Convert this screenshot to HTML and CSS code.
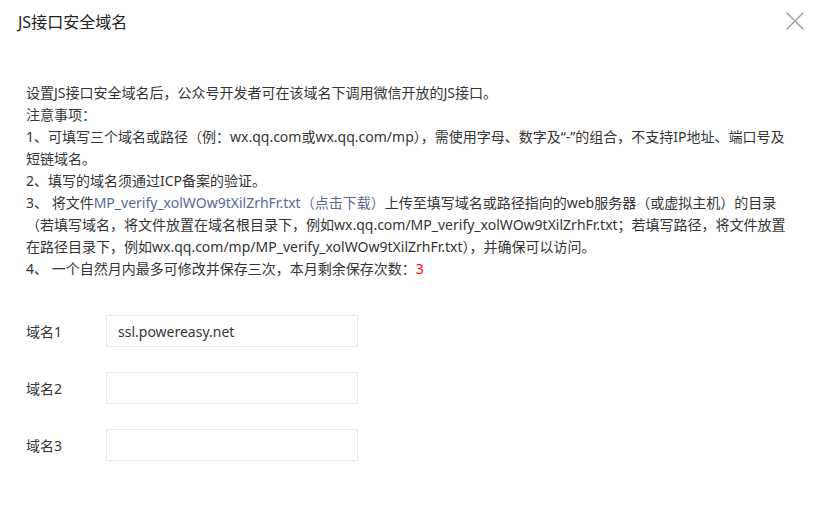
FILE: index.html
```html
<!DOCTYPE html>
<html>

<head>
  <meta charset="utf-8" />
  <link rel="stylesheet" href="styles.css">
</head>

<body>
  <div class="dialog">
    <div class="dialog_hd">
      <h3>JS接口安全域名</h3>
      <a href="javascript:void(0)" class="close">
        <svg width="18" height="18" viewBox="0 0 18 18">
          <path d="M0.5 0.5L17.5 17.5M17.5 0.5L0.5 17.5" stroke="#999" stroke-width="1.3" fill="none" />
        </svg>
      </a>
    </div>
    <div class="dialog_bd">
      <div class="tips">
        <p>设置JS接口安全域名后，公众号开发者可在该域名下调用微信开放的JS接口。</p>
        <p>注意事项：</p>
        <p>1、可填写三个域名或路径（例：wx.qq.com或wx.qq.com/mp），需使用字母、数字及“-”的组合，不支持IP地址、端口号及短链域名。</p>
        <p>2、填写的域名须通过ICP备案的验证。</p>
        <p>3、 将文件<a href="javascript:void(0)">MP_verify_xolWOw9tXilZrhFr.txt（点击下载）</a>上传至填写域名或路径指向的web服务器（或虚拟主机）的目录（若填写域名，将文件放置在域名根目录下，例如wx.qq.com/MP_verify_xolWOw9tXilZrhFr.txt；若填写路径，将文件放置在路径目录下，例如wx.qq.com/mp/MP_verify_xolWOw9tXilZrhFr.txt），并确保可以访问。</p>
        <p>4、 一个自然月内最多可修改并保存三次，本月剩余保存次数：<span class="num">3</span></p>
      </div>
      <div class="form">
        <div class="form_item">
          <label>域名1</label>
          <input type="text" class="frm_input" value="ssl.powereasy.net" />
        </div>
        <div class="form_item">
          <label>域名2</label>
          <input type="text" class="frm_input" value="" />
        </div>
        <div class="form_item">
          <label>域名3</label>
          <input type="text" class="frm_input" value="" />
        </div>
      </div>
    </div>
  </div>
</body>
</html>
```

FILE: styles.css
```css
body {
  margin: 0;
  padding: 0;
  background-color: #fff;
  font-family: "Noto Sans", "Noto Sans CJK SC", sans-serif;
  color: #353535;
}

p,
h3 {
  margin: 0;
  padding: 0;
}

.dialog {
  width: 824px;
  height: 506px;
  background-color: #fff;
}

.dialog_hd {
  height: 42px;
  padding: 0 20px 0 18px;
  display: flex;
  align-items: center;
  justify-content: space-between;
}

.dialog_hd h3 {
  font-size: 16px;
  font-weight: normal;
  color: #222;
}

.close {
  display: block;
  width: 18px;
  height: 18px;
  line-height: 0;
}

.dialog_bd {
  padding: 40px 26px 0;
}

.tips {
  font-size: 14px;
  line-height: 22px;
  color: #353535;
}

.tips a {
  color: #576b95;
  text-decoration: none;
}

.tips .num {
  color: #f00;
}

.form {
  margin-top: 35px;
  display: flex;
  flex-direction: column;
  gap: 25px;
}

.form_item {
  display: flex;
  align-items: center;
}

.form_item label {
  width: 80px;
  font-size: 14px;
  color: #353535;
}

.frm_input {
  box-sizing: border-box;
  width: 252px;
  height: 32px;
  padding: 0 11px;
  border: 1px solid #e7e7eb;
  border-radius: 0;
  outline: none;
  font-family: inherit;
  font-size: 14px;
  color: #353535;
}
```
